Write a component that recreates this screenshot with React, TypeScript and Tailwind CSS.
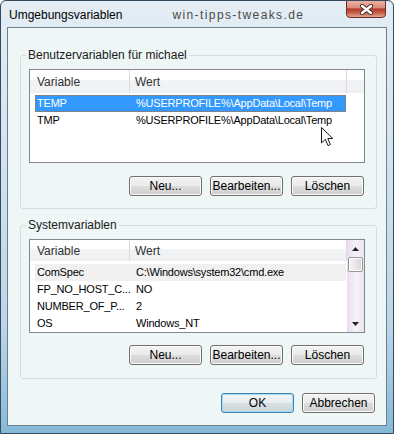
import React from 'react';

const font = { fontFamily: '"Liberation Sans", Arial, sans-serif' };

const Button = ({ label, primary = false }: { label: string; primary?: boolean }) => (
  <button
    className={
      'w-[73px] h-[20px] rounded-[3px] border text-[12px] leading-none text-black ' +
      (primary
        ? 'border-[#3c7fb1] shadow-[inset_0_0_0_1px_#a6def6] bg-[linear-gradient(180deg,#f1f4f6_0%,#e9eef1_50%,#d9e0e4_51%,#ccd4d8_100%)]'
        : 'border-[#707070] shadow-[inset_0_0_0_1px_#fafafa] bg-[linear-gradient(180deg,#f2f2f2_0%,#ebebeb_50%,#dddddd_51%,#cfcfcf_100%)]')
    }
  >
    {label}
  </button>
);

type Row = { name: string; value: string; state?: 'focus' | 'dim' };

const Header = () => (
  <div className="h-[23px] flex text-[12px] text-[#333] bg-[linear-gradient(180deg,#ffffff_0%,#ffffff_42%,#f2f3f5_43%,#eff0f2_100%)]">
    <div className="w-[100px] shrink-0 pl-[7px] flex items-center border-r border-[#dcdcdc]">Variable</div>
    <div className="w-[217px] shrink-0 pl-[5px] flex items-center border-r border-[#dcdcdc]">Wert</div>
    <div className="flex-1" />
  </div>
);

const Rows = ({ rows, gap }: { rows: Row[]; gap: string }) => (
  <div className={'pl-[5px] flex flex-col text-[11px] tracking-[-0.2px] ' + gap}>
    {rows.map((r) => (
      <div
        key={r.name}
        className={
          'w-[311px] h-[17px] flex items-center whitespace-nowrap ' +
          (r.state === 'focus'
            ? 'bg-[#3399ff] text-white border border-dotted border-[#c86a1c]'
            : r.state === 'dim'
            ? 'bg-[#f0f0f0] text-black'
            : 'text-black')
        }
      >
        <div className={'w-[95px] shrink-0 overflow-hidden ' + (r.state === 'focus' ? 'pl-[1px]' : 'pl-[2px]')}>{r.name}</div>
        <div className={r.state === 'focus' ? 'pl-[5px]' : 'pl-[6px]'}>{r.value}</div>
      </div>
    ))}
  </div>
);

const Arrow = ({ down = false }: { down?: boolean }) => (
  <svg width="7" height="4" viewBox="0 0 7 4">
    <path d={down ? 'M0 0 H7 L3.5 4 Z' : 'M0 4 H7 L3.5 0 Z'} fill="#222" />
  </svg>
);

const Scrollbar = () => (
  <div className="w-[17px] h-full flex flex-col bg-[linear-gradient(90deg,#e8ddef_0%,#f7f2f9_55%,#ebe3f0_100%)]">
    <div className="h-[17px] flex items-center justify-center">
      <Arrow />
    </div>
    <div className="flex-1">
      <div className="mx-[1px] h-[15px] rounded-[2px] border border-[#979797] bg-[linear-gradient(90deg,#f6f6f6_0%,#e4e4e4_60%,#d6d6d6_100%)] shadow-[inset_0_0_0_1px_#ffffff]" />
    </div>
    <div className="h-[17px] flex items-center justify-center">
      <Arrow down />
    </div>
  </div>
);

const Group = ({ title, children, className }: { title: string; children: React.ReactNode; className: string }) => (
  <div className={'relative h-[154px] rounded-[3px] border border-[#d3dde2] pt-[13px] pl-[8px] pr-[11px] flex flex-col ' + className}>
    <span className="absolute -top-[8px] left-[5px] px-[2px] bg-[#eef6f6] text-[12px] leading-[14px] text-[#1a1a1a]">{title}</span>
    {children}
  </div>
);

const ButtonRow = ({ gap }: { gap: string }) => (
  <div className={'flex justify-end gap-[8px] pr-[1px] ' + gap}>
    <Button label="Neu..." />
    <Button label="Bearbeiten..." />
    <Button label="Löschen" />
  </div>
);

export default function App() {
  const userRows: Row[] = [
    { name: 'TEMP', value: '%USERPROFILE%\\AppData\\Local\\Temp', state: 'focus' },
    { name: 'TMP', value: '%USERPROFILE%\\AppData\\Local\\Temp' },
  ];
  const sysRows: Row[] = [
    { name: 'ComSpec', value: 'C:\\Windows\\system32\\cmd.exe', state: 'dim' },
    { name: 'FP_NO_HOST_C...', value: 'NO' },
    { name: 'NUMBER_OF_P...', value: '2' },
    { name: 'OS', value: 'Windows_NT' },
  ];

  return (
    <div
      className="relative w-[394px] h-[434px] overflow-hidden rounded-t-[6px] border border-[#34495c] bg-[linear-gradient(180deg,#e4edf4_0%,#d3e3ef_35%,#bcd6e8_75%,#86b9d7_100%)] flex flex-col"
      style={font}
    >
      {/* title bar */}
      <div className="h-[26px] shrink-0 flex items-center pl-[8px] pt-[2px]">
        <span className="text-[12px] text-black">Umgebungsvariablen</span>
        <span className="ml-[50px] text-[12px] tracking-[1.4px] text-[#4a4a4a]">win-tipps-tweaks.de</span>
      </div>

      <div className="absolute -top-[1px] right-[7px] w-[40px] h-[18px] rounded-b-[4px] border border-[#6e2b22] bg-[linear-gradient(180deg,#ebb1a3_0%,#db8c7b_42%,#b23a2a_50%,#c85c49_72%,#e3a595_100%)] flex items-center justify-center">
        <svg width="15" height="11" viewBox="0 0 15 11">
          <path d="M3 2 L12 9 M12 2 L3 9" stroke="#4a2a28" strokeWidth="4.2" strokeLinecap="round" />
          <path d="M3 2 L12 9 M12 2 L3 9" stroke="#ffffff" strokeWidth="2.4" strokeLinecap="round" />
        </svg>
      </div>

      {/* client area */}
      <div className="ml-[6px] w-[380px] h-[399px] shrink-0 border border-[#6c7f90] bg-[#eef6f6] pl-[12px] pr-[9px] flex flex-col">
        <Group title="Benutzervariablen für michael" className="mt-[27px]">
          <div className="h-[94px] shrink-0 border border-[#828790] bg-white flex flex-col">
            <Header />
            <Rows rows={userRows} gap="mt-[2px]" />
          </div>
          <ButtonRow gap="mt-[13px]" />
        </Group>

        <Group title="Systemvariablen" className="mt-[16px]">
          <div className="h-[94px] shrink-0 border border-[#828790] bg-white flex overflow-hidden">
            <div className="w-[317px] shrink-0 flex flex-col">
              <Header />
              <Rows rows={sysRows} gap="mt-[3px]" />
            </div>
            <Scrollbar />
          </div>
          <ButtonRow gap="mt-[12px]" />
        </Group>

        <div className="mt-[14px] mr-[2px] flex justify-end gap-[8px]">
          <Button label="OK" primary />
          <Button label="Abbrechen" />
        </div>
      </div>

      {/* mouse pointer */}
      <svg className="absolute left-[320px] top-[126px]" width="13" height="20" viewBox="0 0 13 20">
        <path d="M0.5 0.5 V16 L4.3 12.3 L7 18.6 L9.4 17.6 L6.8 11.5 H11.8 Z" fill="#ffffff" stroke="#1a1a1a" strokeWidth="1" strokeLinejoin="round" />
      </svg>
    </div>
  );
}
